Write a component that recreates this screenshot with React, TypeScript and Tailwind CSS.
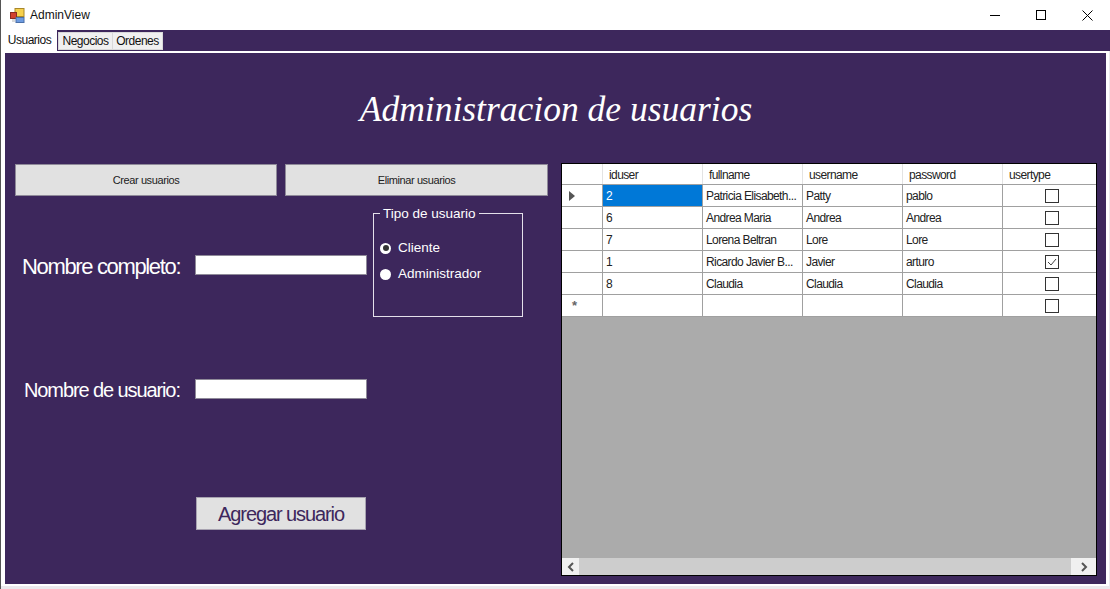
const rows = [
  { id: '2', name: 'Patricia Elisabeth...', user: 'Patty', pass: 'pablo', admin: false },
  { id: '6', name: 'Andrea Maria', user: 'Andrea', pass: 'Andrea', admin: false },
  { id: '7', name: 'Lorena Beltran', user: 'Lore', pass: 'Lore', admin: false },
  { id: '1', name: 'Ricardo Javier B...', user: 'Javier', pass: 'arturo', admin: true },
  { id: '8', name: 'Claudia', user: 'Claudia', pass: 'Claudia', admin: false },
];

const headers = ['iduser', 'fullname', 'username', 'password', 'usertype'];

const rowClass = 'grid h-[22px] grid-cols-[41px_100px_100px_100px_100px_94px] border-b border-[#a0a0a0] text-[12px] tracking-[-0.6px] text-[#222]';
const cellClass = 'flex items-center border-r border-[#a0a0a0] pl-[3px]';

function Check({ checked }: { checked: boolean }) {
  return (
    <div className="flex items-center justify-center pl-[4px]">
      <div className="flex h-[14px] w-[14px] items-center justify-center border border-[#333] bg-white">
        {checked && (
          <svg width="12" height="12" viewBox="0 0 12 12" fill="none">
            <path d="M2 6 L5 9 L10 3" stroke="#444" strokeWidth="1" />
          </svg>
        )}
      </div>
    </div>
  );
}

function AppIcon() {
  return (
    <svg width="15" height="15" viewBox="0 0 15 15">
      <rect x="5" y="0.5" width="9" height="8" fill="#f6d04d" stroke="#a8872a" />
      <rect x="0.5" y="4.5" width="6" height="6" fill="#d2402f" stroke="#8a2a22" />
      <rect x="6" y="9.5" width="8" height="5" fill="#6d9be0" stroke="#4a6fa8" />
      <rect x="2" y="11" width="3" height="3" fill="#d9d9d9" />
    </svg>
  );
}

function DataGrid() {
  return (
    <div className="flex h-[413px] w-[536px] flex-col border border-black bg-[#ababab]">
      <div className="grid h-[21px] grid-cols-[41px_100px_100px_100px_100px_94px] border-b border-[#a0a0a0] bg-white text-[12px] tracking-[-0.6px] text-[#222]">
        <div className="border-r border-[#e3e3e3]" />
        {headers.map(h => (
          <div key={h} className="flex items-center border-r border-[#e3e3e3] pt-[1px] pl-[6px] last:border-r-0">
            {h}
          </div>
        ))}
      </div>
      {rows.map((r, i) => (
        <div key={r.id} className={`${rowClass} bg-white`}>
          <div className={`${cellClass} pl-[7px]`}>
            {i === 0 && (
              <svg width="6" height="10" viewBox="0 0 6 10">
                <path d="M0 0 L6 5 L0 10 Z" fill="#555" />
              </svg>
            )}
          </div>
          <div className={i === 0 ? `${cellClass} bg-[#0078d7] text-white` : cellClass}>{r.id}</div>
          <div className={cellClass}>{r.name}</div>
          <div className={cellClass}>{r.user}</div>
          <div className={cellClass}>{r.pass}</div>
          <Check checked={r.admin} />
        </div>
      ))}
      <div className={`${rowClass} bg-white`}>
        <div className={`${cellClass} pl-[10px] text-[13px] font-bold text-[#666]`}>*</div>
        <div className={cellClass} />
        <div className={cellClass} />
        <div className={cellClass} />
        <div className={cellClass} />
        <Check checked={false} />
      </div>
      <div className="flex-1" />
      <div className="flex h-[17px] items-center bg-[#f0f0f0]">
        <div className="flex w-[17px] justify-center">
          <svg width="8" height="10" viewBox="0 0 8 10" fill="none">
            <path d="M6 1 L2 5 L6 9" stroke="#555" strokeWidth="2" />
          </svg>
        </div>
        <div className="h-full flex-1 bg-[#cdcdcd]" />
        <div className="flex w-[25px] justify-center">
          <svg width="8" height="10" viewBox="0 0 8 10" fill="none">
            <path d="M2 1 L6 5 L2 9" stroke="#555" strokeWidth="2" />
          </svg>
        </div>
      </div>
    </div>
  );
}

export default function App() {
  return (
    <div className="flex h-[589px] w-[1110px] flex-col overflow-hidden border-l border-[#555] bg-[#ebe9ed] font-['Liberation_Sans',Arial,sans-serif]">
      <div className="flex h-[30px] items-center bg-white pl-[9px]">
        <AppIcon />
        <span className="ml-[5px] text-[12px] text-[#111]">AdminView</span>
        <div className="ml-auto flex items-center text-black">
          <div className="flex w-[46px] justify-center">
            <svg width="10" height="10" viewBox="0 0 10 10"><path d="M0 5.5 H10" stroke="#000" /></svg>
          </div>
          <div className="flex w-[46px] justify-center">
            <svg width="10" height="10" viewBox="0 0 10 10"><rect x="0.5" y="0.5" width="9" height="9" fill="none" stroke="#000" /></svg>
          </div>
          <div className="flex w-[46px] justify-center">
            <svg width="11" height="11" viewBox="0 0 11 11"><path d="M0.5 0.5 L10.5 10.5 M10.5 0.5 L0.5 10.5" stroke="#000" /></svg>
          </div>
        </div>
      </div>

      <div className="flex h-[21px] shrink-0 items-start bg-[#3d275c] text-[12px] tracking-[-0.5px] text-[#111]">
        <div className="h-[22px] w-[1px] bg-white" />
        <div className="flex h-[22px] w-[55px] items-center justify-center bg-white pb-[2px]">Usuarios</div>
        <div className="mt-[2px] ml-[1px] flex h-[18px] w-[55px] items-center justify-center border border-[#d9d9d9] bg-[#f0f0f0]">Negocios</div>
        <div className="mt-[2px] flex h-[18px] w-[50px] items-center justify-center border border-l-0 border-[#d9d9d9] bg-[#f0f0f0]">Ordenes</div>
      </div>

      <div className="mr-[1px] mb-[3px] min-h-0 flex-1 bg-white pt-[2px] pr-[3px] pb-[2px] pl-[4px]">
        <div className="flex h-full flex-col bg-[#3d275c] pr-[9px] pb-[8px] pl-[10px]">
          <h1 className="flex h-[110px] shrink-0 items-center justify-center pt-[4px] font-['Liberation_Serif',serif] text-[35.5px] font-normal italic text-white">
            Administracion de usuarios
          </h1>

          <div className="flex flex-1 justify-between">
            <div className="flex w-[533px] flex-col">
              <div className="flex gap-[8px] pt-[1px] text-[11px] tracking-[-0.4px] text-[#222]">
                <button className="h-[32px] w-[262px] border border-[#8f8a99] bg-[#e1e1e1]">Crear usuarios</button>
                <button className="h-[32px] w-[263px] border border-[#8f8a99] bg-[#e1e1e1]">Eliminar usuarios</button>
              </div>

              <div className="flex flex-1 items-start">
                <div className="flex w-[352px] flex-col">
                  <div className="mt-[59px] flex h-[20px] items-center">
                    <label className="w-[180px] pt-[3px] pl-[7px] text-[22px] tracking-[-1.35px] whitespace-nowrap text-white">Nombre completo:</label>
                    <input className="h-[20px] w-[172px] border border-[#8f8a99] bg-white" />
                  </div>
                  <div className="mt-[104px] flex h-[20px] items-center">
                    <label className="w-[180px] pt-[2px] pl-[9px] text-[20px] tracking-[-1.1px] whitespace-nowrap text-white">Nombre de usuario:</label>
                    <input className="h-[20px] w-[172px] border border-[#8f8a99] bg-white" />
                  </div>
                  <button className="mt-[98px] ml-[181px] h-[33px] w-[170px] border border-[#a7a2b0] bg-[#e1e1e1] text-[20px] tracking-[-1.1px] text-[#3d275c]">
                    Agregar usuario
                  </button>
                </div>

                <fieldset className="mt-[10px] ml-[6px] h-[111px] w-[150px] border border-[#e4e0ea] pl-[6px] text-[13.5px] text-white">
                  <legend className="px-[3px] leading-[15px]">Tipo de usuario</legend>
                  <div className="mt-[17px] flex items-center gap-[7px]">
                    <span className="flex h-[11px] w-[11px] items-center justify-center rounded-full bg-white">
                      <span className="h-[6px] w-[6px] rounded-full bg-[#333]" />
                    </span>
                    Cliente
                  </div>
                  <div className="mt-[6px] flex items-center gap-[7px]">
                    <span className="h-[11px] w-[11px] rounded-full bg-white" />
                    Administrador
                  </div>
                </fieldset>
              </div>
            </div>

            <DataGrid />
          </div>
        </div>
      </div>
    </div>
  );
}
